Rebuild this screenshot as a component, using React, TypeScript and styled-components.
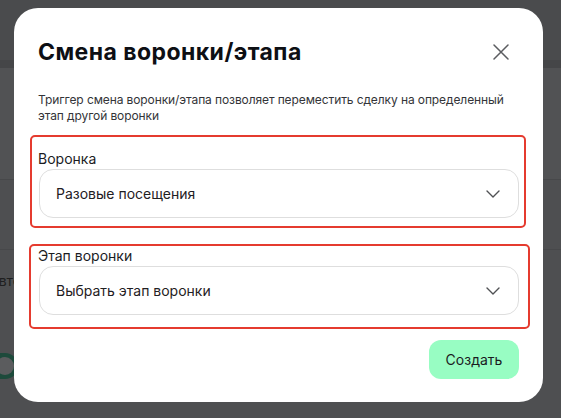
import React from "react";
import styled, { createGlobalStyle } from "styled-components";

const Global = createGlobalStyle`
  html, body { margin: 0; padding: 0; }
  body {
    width: 561px;
    height: 418px;
    overflow: hidden;
    font-family: Inter, "Noto Sans", "Liberation Sans", sans-serif;
    -webkit-font-smoothing: antialiased;
  }
`;

const Page = styled.div`
  position: relative;
  width: 561px;
  height: 418px;
  background: #4e4f51;
  overflow: hidden;
  display: flex;
  flex-direction: column;
`;

const BgHeader = styled.div`
  height: 60px;
  background: #4a4b4d;
`;

const BgBand = styled.div`
  height: 8px;
  background: #454648;
`;

const BgSection = styled.div<{ $h: number; $tone: string; $line?: boolean }>`
  height: ${(p) => p.$h}px;
  flex-shrink: 0;
  background: ${(p) => p.$tone};
  border-bottom: ${(p) => (p.$line ? "1px solid #47484a" : "none")};
  box-sizing: border-box;
  display: flex;
  align-items: center;
`;

const BgText = styled.span`
  margin-left: -11px;
  font-size: 14px;
  color: #1e1f20;
`;

const BgToggle = styled.div`
  margin-left: -18px;
  width: 36px;
  height: 26px;
  border-radius: 13px;
  background: #1d4a3b;
  display: flex;
  align-items: center;
  justify-content: flex-end;
  padding: 0 4px;
  box-sizing: border-box;
`;

const BgKnob = styled.div`
  width: 18px;
  height: 18px;
  border-radius: 50%;
  background: #5b5c5e;
`;

const Modal = styled.div`
  position: absolute;
  left: 14px;
  top: 8px;
  width: 529px;
  height: 394px;
  box-sizing: border-box;
  background: #ffffff;
  border-radius: 24px;
  padding: 0 16px;
  display: flex;
  flex-direction: column;
`;

const Header = styled.div`
  display: flex;
  align-items: center;
  justify-content: space-between;
  padding: 30px 14px 0 8px;
  height: 58px;
  box-sizing: border-box;
`;

const Title = styled.h2`
  margin: 0;
  font-size: 23px;
  line-height: 28px;
  font-weight: 700;
  color: #0d0f14;
  letter-spacing: 0.45px;
`;

const CloseButton = styled.button`
  width: 24px;
  height: 24px;
  padding: 0;
  border: none;
  background: transparent;
  display: flex;
  align-items: center;
  justify-content: center;
  cursor: pointer;
`;

const Description = styled.p`
  margin: 26px 0 0 8px;
  font-size: 12px;
  line-height: 16px;
  color: #333438;
  letter-spacing: -0.1px;
`;

const FieldGroup = styled.div<{ $ml: number; $mr: number; $mt: number; $pad: string }>`
  margin: ${(p) => p.$mt}px ${(p) => p.$mr}px 0 ${(p) => p.$ml}px;
  border: 2px solid #e53b2f;
  border-radius: 5px;
  padding: ${(p) => p.$pad};
  display: flex;
  flex-direction: column;
`;

const Label = styled.label`
  font-size: 14px;
  line-height: 20px;
  color: #1b1c1f;
  margin-left: -1px;
`;

const Select = styled.div`
  height: 49px;
  box-sizing: border-box;
  border: 1px solid #dedede;
  border-radius: 14px;
  padding: 0 18px 0 16px;
  display: flex;
  align-items: center;
  justify-content: space-between;
  font-size: 14px;
  color: #1f2023;
  cursor: pointer;
`;

const Footer = styled.div`
  display: flex;
  justify-content: flex-end;
  margin-top: 11px;
  padding-right: 8px;
`;

const CreateButton = styled.button`
  width: 90px;
  height: 39px;
  border: none;
  border-radius: 12px;
  background: #98fdc3;
  font-family: inherit;
  font-size: 14px;
  color: #1b1c1f;
  cursor: pointer;
`;

const Chevron = () => (
  <svg width="14" height="8" viewBox="0 0 14 8" fill="none">
    <path d="M1 1l6 6 6-6" stroke="#505154" strokeWidth="1.4" strokeLinecap="round" strokeLinejoin="round" />
  </svg>
);

const CloseIcon = () => (
  <svg width="16" height="16" viewBox="0 0 16 16" fill="none">
    <path d="M1 1l14 14M15 1L1 15" stroke="#5b5c60" strokeWidth="1.5" strokeLinecap="round" />
  </svg>
);

export default function App() {
  return (
    <>
      <Global />
      <Page>
        <BgHeader />
        <BgBand />
        <BgSection $h={112} $tone="#515254" $line />
        <BgSection $h={70} $tone="#4e4f51" $line />
        <BgSection $h={60} $tone="#4e4f51">
          <BgText>Авто</BgText>
        </BgSection>
        <BgSection $h={30} $tone="#4e4f51" />
        <BgSection $h={52} $tone="#4e4f51">
          <BgToggle>
            <BgKnob />
          </BgToggle>
        </BgSection>
        <Modal>
          <Header>
            <Title>Смена воронки/этапа</Title>
            <CloseButton aria-label="Закрыть">
              <CloseIcon />
            </CloseButton>
          </Header>
          <Description>
            Триггер смена воронки/этапа позволяет переместить сделку на определенный этап другой воронки
          </Description>
          <FieldGroup $ml={0} $mr={1} $mt={11} $pad="12px 5px 8px 7px">
            <Label>Воронка</Label>
            <Select>
              <span>Разовые посещения</span>
              <Chevron />
            </Select>
          </FieldGroup>
          <FieldGroup $ml={-1} $mr={-3} $mt={16} $pad="0px 9px 12px 8px">
            <Label>Этап воронки</Label>
            <Select>
              <span>Выбрать этап воронки</span>
              <Chevron />
            </Select>
          </FieldGroup>
          <Footer>
            <CreateButton>Создать</CreateButton>
          </Footer>
        </Modal>
      </Page>
    </>
  );
}
